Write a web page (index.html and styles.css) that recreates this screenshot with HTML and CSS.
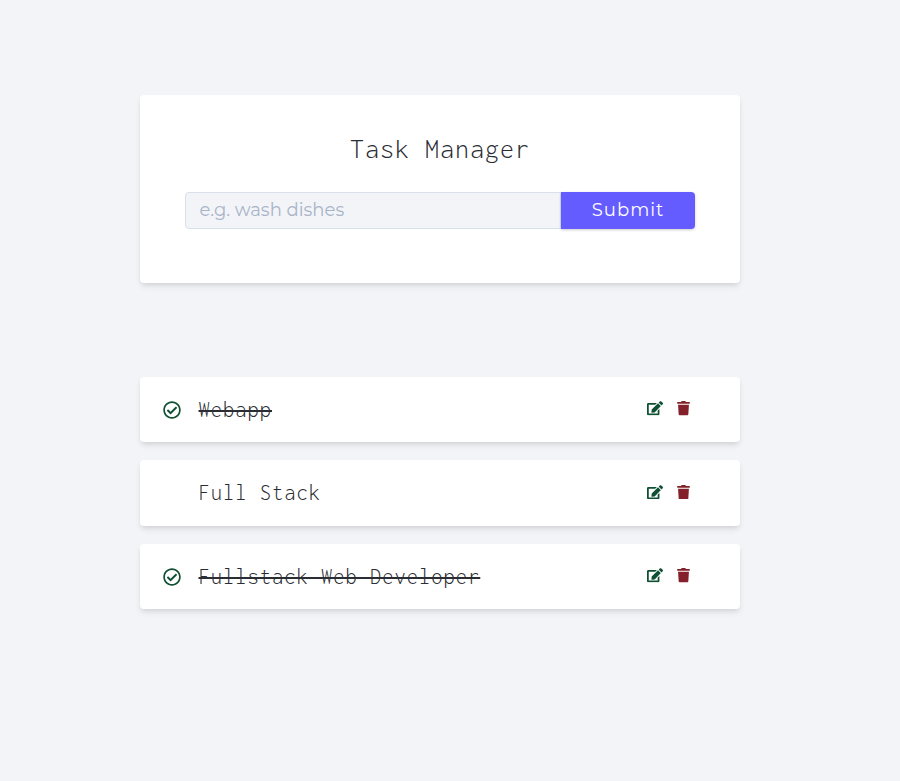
FILE: index.html
```html
<!DOCTYPE html>
<html lang="en">
<head>
<meta charset="utf-8">
<title>Task Manager</title>
<link rel="stylesheet" href="styles.css">
</head>
<body>
<svg class="sprite" aria-hidden="true">
  <symbol id="check" viewBox="0 0 512 512"><path d="M256 8C119 8 8 119 8 256s111 248 248 248 248-111 248-248S393 8 256 8zm0 48c110.500 0 200 89.500 200 200 0 110.500-89.500 200-200 200-110.500 0-200-89.500-200-200 0-110.500 89.500-200 200-200m140.200 130.300l-22.500-22.700c-4.700-4.700-12.300-4.700-17-.1L215.300 303.700l-59.800-60.300c-4.700-4.700-12.300-4.700-17-.1l-22.700 22.500c-4.700 4.700-4.700 12.300-.1 17l90.800 91.500c4.700 4.700 12.300 4.700 17 .1l172.600-171.200c4.700-4.700 4.700-12.300.1-17z"/></symbol>
  <symbol id="edit" viewBox="0 0 576 512"><path d="M402.600 83.200l90.200 90.200c3.800 3.800 3.800 10 0 13.800L274.400 405.600l-92.800 10.300c-12.400 1.400-22.900-9.100-21.500-21.500l10.300-92.800L388.800 83.200c3.800-3.800 10-3.800 13.800 0zm162-22.900l-48.800-48.800c-15.200-15.200-39.900-15.200-55.200 0l-35.400 35.400c-3.800 3.800-3.800 10 0 13.800l90.200 90.200c3.800 3.800 10 3.800 13.800 0l35.400-35.400c15.200-15.300 15.200-40 0-55.200zM384 346.200V448H64V128h229.800c3.200 0 6.200-1.300 8.500-3.500l40-40c7.600-7.600 2.200-20.500-8.500-20.500H48C21.500 64 0 85.500 0 112v352c0 26.500 21.500 48 48 48h352c26.500 0 48-21.500 48-48V306.200c0-10.700-12.900-16-20.500-8.500l-40 40c-2.200 2.300-3.500 5.300-3.500 8.500z"/></symbol>
  <symbol id="trash" viewBox="0 0 448 512"><path d="M432 32H312l-9.400-18.700A24 24 0 0 0 281.100 0H166.800a23.700 23.700 0 0 0-21.400 13.300L136 32H16A16 16 0 0 0 0 48v32a16 16 0 0 0 16 16h416a16 16 0 0 0 16-16V48a16 16 0 0 0-16-16zM53.200 467a48 48 0 0 0 47.900 45h245.800a48 48 0 0 0 47.900-45L416 128H32z"/></symbol>
</svg>
<main class="page">
  <form class="card task-form">
    <h1 class="title">Task Manager</h1>
    <div class="form-control">
      <input class="task-input" type="text" placeholder="e.g. wash dishes" aria-label="Task">
      <button class="submit" type="button">Submit</button>
    </div>
  </form>
  <section class="tasks">
    <article class="card task done">
      <svg class="check"><use href="#check"/></svg>
      <h2 class="name"><span>Webapp</span></h2>
      <div class="actions"><svg class="edit"><use href="#edit"/></svg><svg class="trash"><use href="#trash"/></svg></div>
    </article>
    <article class="card task">
      <svg class="check"><use href="#check"/></svg>
      <h2 class="name"><span>Full Stack</span></h2>
      <div class="actions"><svg class="edit"><use href="#edit"/></svg><svg class="trash"><use href="#trash"/></svg></div>
    </article>
    <article class="card task done">
      <svg class="check"><use href="#check"/></svg>
      <h2 class="name"><span>Fullstack Web Developer</span></h2>
      <div class="actions"><svg class="edit"><use href="#edit"/></svg><svg class="trash"><use href="#trash"/></svg></div>
    </article>
  </section>
</main>
</body>
</html>
```
FILE: styles.css
```css
* { box-sizing: border-box; }
body {
  margin: 0;
  min-height: 100vh;
  background: #f2f4f8;
  color: #2a2d33;
  font-family: Montserrat, Inter, sans-serif;
}
.sprite { display: none; }
.page { width: 600px; margin-left: 140px; padding-top: 95px; }
.card {
  background: #fff;
  border-radius: 4px;
  box-shadow: 0 4px 6px -1px rgba(0, 0, 0, .1), 0 2px 4px -1px rgba(0, 0, 0, .06);
}
.task-form { height: 188px; padding: 35px 45px 0; }
.title, .name {
  margin: 0;
  font-family: Inconsolata, "Noto Sans Mono CJK SC", "Liberation Mono", monospace;
  font-weight: 350;
}
.title {
  height: 38px;
  line-height: 38px;
  margin-bottom: 24px;
  font-size: 28px;
  letter-spacing: 1px;
  text-align: center;
}
.form-control { display: grid; grid-template-columns: 376px 134px; height: 37px; }
.task-input {
  min-width: 0;
  padding: 0 13px 2px 13.500px;
  border: 1px solid #d9dfec;
  border-radius: 4px 0 0 4px;
  background: #f2f4f8;
  font: 400 18px Montserrat, Inter, sans-serif;
}
.task-input::placeholder { color: #a9b4c8; opacity: 1; }
.submit {
  padding: 0 0 2px;
  border: 0;
  border-radius: 0 4px 4px 0;
  background: #645cff;
  color: #fff;
  font: 400 18px Montserrat, Inter, sans-serif;
  letter-spacing: 1px;
  box-shadow: 0 1px 3px rgba(0, 0, 0, .2);
}
.tasks { display: grid; gap: 18px; margin-top: 94px; }
.task {
  display: grid;
  grid-template-columns: 36px 1fr auto;
  align-items: center;
  height: 65.400px;
  padding: 0 50px 0 22.500px;
}
.task svg { fill: currentColor; }
.check { width: 18px; height: 18px; margin-top: 1px; color: #0f5132; }
.task:not(.done) .check { visibility: hidden; }
.name {
  padding-top: .5px;
  line-height: 30px;
  font-size: 22.500px;
  letter-spacing: 1px;
}
.done .name span { text-decoration: line-through; text-decoration-thickness: 2px; }
.actions { display: flex; align-items: center; gap: 14px; padding-bottom: 2px; }
.edit { width: 16px; height: 14.500px; color: #0f5132; }
.trash { width: 13px; height: 14.500px; color: #842029; }
```
